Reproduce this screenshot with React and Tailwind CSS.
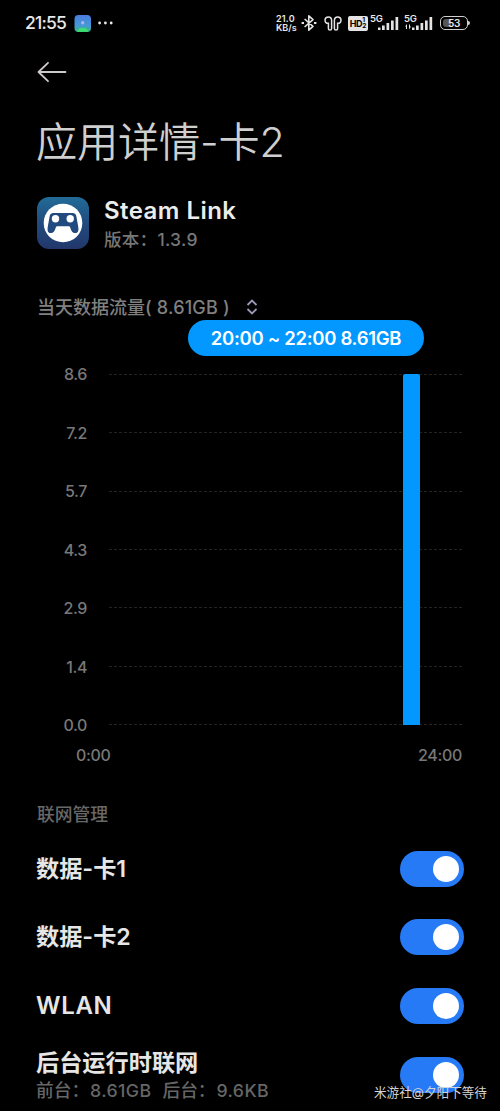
import { useState } from "react";

const yLabels = ["8.6", "7.2", "5.7", "4.3", "2.9", "1.4", "0.0"];

function Bluetooth() {
  return (
    <svg className="w-4 h-[18px]" viewBox="0 0 16 18" fill="none" stroke="#e4e4e4" strokeWidth="1.6">
      <path d="M3.6 5 12 12.4 7.8 16.2V1.8L12 5.6 3.6 13" strokeLinejoin="round" />
      <path d="M.6 9h2.4M13 9h2.4" strokeWidth="2" />
    </svg>
  );
}

function Earbuds() {
  return (
    <svg className="w-[18px] h-[15px]" viewBox="0 0 18 15" fill="none" stroke="#e4e4e4" strokeWidth="1.5">
      <path d="M7.6 4.3C7.6 2.2 6.3 1 4.5 1 2.5 1 1 2.4 1 4.3c0 2 1.4 3.2 3.4 3v5.1c0 1 .6 1.6 1.6 1.6s1.6-.6 1.6-1.6z" />
      <path d="M10.4 4.3C10.4 2.2 11.7 1 13.5 1 15.5 1 17 2.4 17 4.3c0 2-1.4 3.2-3.4 3v5.1c0 1-.6 1.6-1.6 1.6s-1.6-.6-1.6-1.6z" />
    </svg>
  );
}

function Signal({ arrows }) {
  return (
    <div className="relative w-[29px] h-[18px]">
      <span className="absolute left-[-1px] top-0 text-[9.5px] leading-[9px] font-semibold tracking-[-0.3px]">5G</span>
      <svg className="w-[29px] h-[18px]" viewBox="0 0 29 18" fill="#e4e4e4">
        <rect x="7" y="13.5" width="2.5" height="2.5" />
        <rect x="11" y="11.5" width="2.7" height="4.5" />
        <rect x="15.5" y="9" width="2.7" height="7" />
        <rect x="20" y="6.500" width="2.7" height="9.5" />
        <rect x="24.5" y="3" width="2.7" height="13" />
        {arrows && <path d="M0 12.5 2 10v5H1v-2.5zM6 12.5 4 15.500V10.500h1v2z" />}
      </svg>
    </div>
  );
}

function StatusBar() {
  return (
    <div className="h-[46px] flex items-center justify-between pl-[25px] pr-[30px] text-[#e8e8e8]">
      <div className="flex items-center">
        <span className="w-[42px] text-[17.5px] font-medium tracking-[-0.8px] whitespace-nowrap">21:55</span>
        <svg className="ml-[7px] w-[17px] h-[17px]" viewBox="0 0 17 17">
          <defs>
            <linearGradient id="tray" x1="0" y1="0" x2="0" y2="1">
              <stop offset="0" stopColor="#4b7de0" />
              <stop offset="0.6" stopColor="#4597d8" />
              <stop offset="1" stopColor="#35b978" />
            </linearGradient>
          </defs>
          <rect x="0.5" width="16.5" height="17" rx="4" fill="url(#tray)" />
          <path d="M3 16.8c1-5.500 10.500-5.500 11.500 0z" fill="#3cdc70" />
          <circle cx="8.700" cy="7.700" r="1.7" fill="#a8b8e8" />
        </svg>
        <svg className="ml-[7px] w-[15px] h-1" viewBox="0 0 15 4" fill="#e8e8e8">
          <circle cx="1.6" cy="2" r="1.4" />
          <circle cx="7.4" cy="2" r="1.4" />
          <circle cx="13.2" cy="2" r="1.4" />
        </svg>
      </div>
      <div className="flex items-center">
        <div className="w-[22px] text-[9px] leading-[9px] font-semibold whitespace-nowrap">
          <div className="h-[9px] tracking-[0.2px]">21.0</div>
          <div className="h-[9px]">KB/s</div>
        </div>
        <div className="ml-[3px]"><Bluetooth /></div>
        <div className="ml-[7px]"><Earbuds /></div>
        <div className="ml-[6px] w-5 h-[15px] rounded-[2px] bg-[#e4e4e4] text-black flex items-center justify-center">
          <span className="text-[9px] leading-none font-bold tracking-[-0.4px]">HD</span>
          <span className="text-[6.5px] leading-[6.5px] font-bold">
            <span className="block">1</span>
            <span className="block">2</span>
          </span>
        </div>
        <div className="ml-[3px]"><Signal /></div>
        <div className="ml-[5px]"><Signal arrows /></div>
        <div className="ml-[6px] flex items-center">
          <div className="relative w-7 h-[14px] rounded-[5px] border border-[#cfcfcf] flex items-center justify-center">
            <div className="absolute left-[2px] top-[2px] w-[8px] h-2 rounded-l-[3px] bg-[#555]" />
            <span className="relative text-[10px] leading-none font-semibold tracking-[-0.3px]">53</span>
          </div>
          <div className="w-[2px] h-1 rounded-r bg-[#cfcfcf]" />
        </div>
      </div>
    </div>
  );
}

function AppIcon() {
  return (
    <svg className="mt-[2px] ml-[0.5px] w-[52px] h-[52px]" viewBox="0 0 52 52">
      <defs>
        <linearGradient id="steam" x1="0" y1="0" x2="0" y2="1">
          <stop offset="0" stopColor="#226b98" />
          <stop offset="0.5" stopColor="#214b7e" />
          <stop offset="1" stopColor="#22376b" />
        </linearGradient>
      </defs>
      <rect width="52" height="52" rx="12" fill="url(#steam)" />
      <circle cx="26" cy="26" r="19.3" fill="#fff" />
      <path
        d="M16.500 16h19c2.500 0 3.500 1.500 3.900 3.500l1.600 9c1 5 .3 7.500-2.600 7.500-3 0-4-2-5.200-5.600-.3-.8-.8-1.200-1.700-1.200h-11c-.9 0-1.400.4-1.700 1.200C17.600 34 16.600 36 13.600 36c-2.900 0-3.600-2.500-2.600-7.500l1.600-9c.4-2 1.400-3.500 3.900-3.500z"
        fill="#214b7e"
      />
      <circle cx="18.5" cy="21.7" r="3.7" fill="#fff" />
      <circle cx="33.2" cy="21.7" r="3.7" fill="#fff" />
    </svg>
  );
}

function Switch() {
  const [on, setOn] = useState(true);
  return (
    <button
      role="switch"
      aria-checked={on}
      onClick={() => setOn(!on)}
      className={`w-16 h-9 px-[5px] rounded-full flex items-center ${on ? "bg-[#267af5] justify-end" : "bg-[#333] justify-start"}`}
    >
      <span className="w-[26px] h-[26px] rounded-full bg-white" />
    </button>
  );
}

function Row({ children }) {
  return (
    <div className="h-[68.7px] flex items-center justify-between text-[23.2px] leading-7 font-semibold text-[#e6e6e6] whitespace-nowrap">
      <div>{children}</div>
      <Switch />
    </div>
  );
}

function Chart() {
  return (
    <div className="h-[371px] flex text-[16px] font-medium text-[#787878]">
      <div className="w-[51px] flex flex-col justify-between text-right tracking-[-0.4px]">
        {yLabels.map((label) => (
          <span key={label} className="leading-5">{label}</span>
        ))}
      </div>
      <div className="relative ml-[22px] w-[353px] py-[10px] flex flex-col justify-between">
        {yLabels.map((label) => (
          <div key={label} className="border-t border-dashed border-[#232323]" />
        ))}
        <div className="absolute left-[294px] top-[10px] bottom-[10px] w-[17px] rounded-t-[2px] bg-[#0398ff]" />
        <div className="absolute left-[79px] top-[-44px] w-[236px] h-9 pt-[1px] rounded-full bg-[#0398ff] flex items-center justify-center text-[18.5px] font-semibold text-white whitespace-nowrap tracking-[-0.3px]">
          20:00 ~ 22:00 8.61GB
        </div>
      </div>
    </div>
  );
}

export default function App() {
  return (
    <div className="relative w-[500px] h-[1111px] overflow-hidden bg-black font-['Inter','Noto_Sans_CJK_SC',sans-serif]">
      <StatusBar />
      <div className="px-9">
        <svg className="mt-[15px] w-[31px] h-[22px]" viewBox="0 0 31 22" fill="none" stroke="#cfcaca" strokeWidth="1.8" strokeLinecap="round" strokeLinejoin="round">
          <path d="M29.5 11H2.5M12 1.8 2.5 11l9.5 9.2" />
        </svg>
        <h1 className="mt-[29px] h-[60px] leading-[60px] text-[41.2px] font-[350] text-[#cfcfcf] tracking-[-0.2px] whitespace-nowrap">应用详情-卡2</h1>

        <div className="mt-[23px] h-14 flex items-start">
          <AppIcon />
          <div className="ml-[15.500px] mt-[2px] whitespace-nowrap">
            <div className="text-[24px] leading-7 font-semibold tracking-[0.45px] text-[#ececec]">Steam Link</div>
            <div className="mt-[3px] text-[17.5px] leading-6 font-medium text-[#777] tracking-[0.3px]">版本：1.3.9</div>
          </div>
        </div>

        <div className="mt-[44px] h-6 pl-[1px] flex items-center text-[18px] font-medium text-[#808080] whitespace-nowrap">
          <span>当天数据流量<span className="tracking-[0.2px]">( 8.61GB )</span></span>
          <svg className="ml-4 w-3 h-4" viewBox="0 0 12 16" fill="none" stroke="#9d97b8" strokeWidth="1.8">
            <path d="M1.5 6 6 1.5 10.5 6M1.5 10 6 14.5 10.5 10" />
          </svg>
        </div>

        <div className="mt-[45px]">
          <Chart />
        </div>
        <div className="mt-[8px] ml-10 mr-[2px] flex justify-between text-[16px] leading-6 font-medium tracking-[-0.3px] text-[#787878]">
          <span>0:00</span>
          <span>24:00</span>
        </div>

        <div className="mt-9 h-6 pl-[1px] leading-6 text-[17.8px] font-medium text-[#686868]">联网管理</div>
        <div className="mt-[7.400px]">
          <Row>数据-卡1</Row>
          <Row>数据-卡2</Row>
          <Row><span className="text-[24px] tracking-[0.7px]">WLAN</span></Row>
          <Row>
            <div className="pt-[5px]">后台运行时联网</div>
            <div className="text-[17.7px] leading-7 font-medium text-[#666]">
              <span>前台：</span>
              <span className="ml-[1px] tracking-[0.4px]">8.61GB</span>
              <span className="ml-[11px]">后台：</span>
              <span className="ml-[1px] tracking-[0.4px]">9.6KB</span>
            </div>
          </Row>
        </div>
      </div>
      <span className="absolute left-[374px] top-[1084px] text-[12.6px] leading-[18px] text-[#d4d4d4] whitespace-nowrap">米游社@夕阳下等待</span>
    </div>
  );
}
